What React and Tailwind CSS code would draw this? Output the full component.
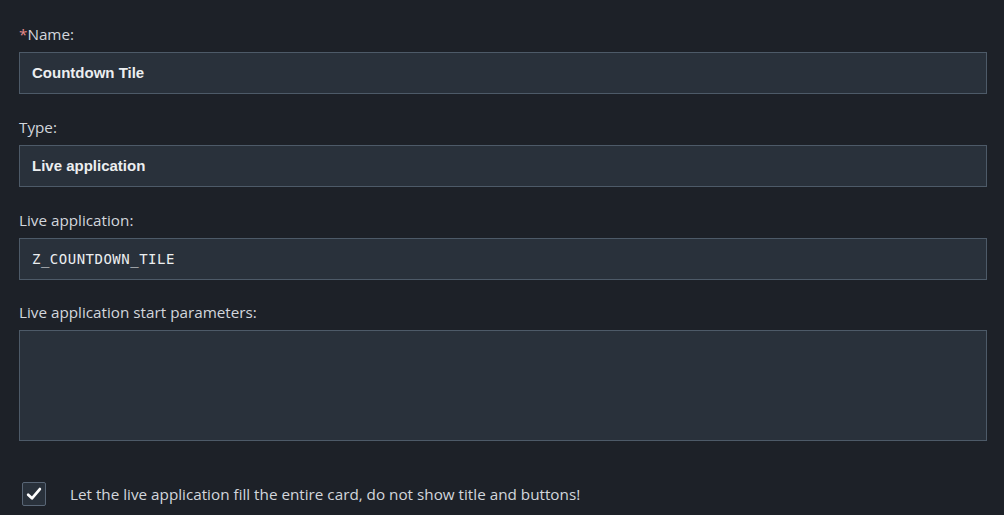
import React from "react";

const font = { fontFamily: '"Liberation Sans", Arial, sans-serif' };
const labelFont = { fontFamily: '"Open Sans", "Liberation Sans", sans-serif' };

function Label({ children, required }) {
  return (
    <div className="h-5 leading-5 text-[15.25px] font-medium text-[#d2d6dc]" style={labelFont}>
      {required && <span className="text-[#e58b8b]">*</span>}
      {children}
    </div>
  );
}

function Input({ children, mono }) {
  return (
    <div
      className={`mt-2 h-[42px] w-[968px] border border-[#4d5a68] bg-[#29313b] px-3 flex items-center text-[#eceef0] ${
        mono ? "text-[14px] tracking-[0.5px]" : "text-[15px] font-semibold"
      }`}
      style={mono ? { fontFamily: '"DejaVu Sans Mono", monospace' } : undefined}
    >
      {children}
    </div>
  );
}

export default function App() {
  return (
    <div className="w-[1004px] h-[515px] overflow-hidden bg-[#1d2128] pl-[19px] pt-6" style={font}>
      <Label required>Name:</Label>
      <Input>Countdown Tile</Input>
      <div className="mt-[23px]">
        <Label>Type:</Label>
        <Input>Live application</Input>
      </div>
      <div className="mt-[23px]">
        <Label>Live application:</Label>
        <Input mono>Z_COUNTDOWN_TILE</Input>
      </div>
      <div className="mt-[22px]">
        <Label>Live application start parameters:</Label>
        <div className="mt-2 h-[111px] w-[968px] border border-[#4d5a68] bg-[#29313b]" />
      </div>
      <div className="mt-[41px] flex items-center">
        <div className="ml-[3px] h-6 w-6 rounded-[2px] border border-[#596676] bg-[#29313b] flex items-center justify-center">
          <svg width="18" height="18" viewBox="0 0 16 16" fill="none">
            <path d="M2.8 8.6 L6.2 11.8 L13.2 3.6" stroke="#ffffff" strokeWidth="2.4" strokeLinecap="round" strokeLinejoin="round" />
          </svg>
        </div>
        <span className="ml-6 text-[15.25px] font-medium text-[#d2d6dc]" style={labelFont}>
          Let the live application fill the entire card, do not show title and buttons!
        </span>
      </div>
    </div>
  );
}
